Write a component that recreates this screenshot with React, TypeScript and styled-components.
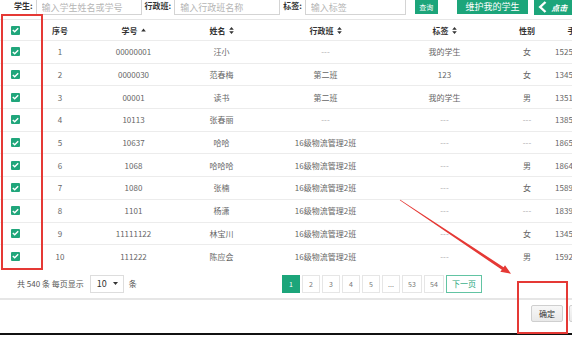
import styled, { createGlobalStyle } from "styled-components";

const GlobalStyle = createGlobalStyle`
  html, body {
    margin: 0;
    padding: 0;
    background: #ffffff;
  }
  body {
    font-family: "Noto Sans CJK SC", "Noto Sans", sans-serif;
  }
`;

const green = "#1ca57a";

interface StudentRow {
  no: number;
  code: string;
  name: string;
  klass: string;
  tag: string;
  gender: string;
  phone: string;
}

const rows: StudentRow[] = [
  { no: 1, code: "00000001", name: "汪小", klass: "---", tag: "我的学生", gender: "女", phone: "15259871234" },
  { no: 2, code: "0000030", name: "范春梅", klass: "第二班", tag: "123", gender: "女", phone: "13459874561" },
  { no: 3, code: "00001", name: "读书", klass: "第二班", tag: "我的学生", gender: "男", phone: "13514562378" },
  { no: 4, code: "10113", name: "张春丽", klass: "---", tag: "---", gender: "---", phone: "13854123698" },
  { no: 5, code: "10637", name: "哈哈", klass: "16级物流管理2班", tag: "---", gender: "---", phone: "18653214789" },
  { no: 6, code: "1068", name: "哈哈哈", klass: "16级物流管理2班", tag: "---", gender: "男", phone: "18647852136" },
  { no: 7, code: "1080", name: "张楠", klass: "16级物流管理2班", tag: "---", gender: "女", phone: "15896321478" },
  { no: 8, code: "1101", name: "杨潇", klass: "16级物流管理2班", tag: "---", gender: "---", phone: "18395147852" },
  { no: 9, code: "11111122", name: "林宝川", klass: "16级物流管理2班", tag: "---", gender: "女", phone: "13456987412" },
  { no: 10, code: "111222", name: "陈应会", klass: "16级物流管理2班", tag: "---", gender: "男", phone: "15921478563" },
];

const pages = ["1", "2", "3", "4", "5", "...", "53", "54"];

const CheckBox = () => (
  <StyledCheck>
    <svg width="7" height="6" viewBox="0 0 7 6">
      <path d="M0.8 3 L2.7 4.8 L6.2 1.2" fill="none" stroke="#fff" strokeWidth="1.4" />
    </svg>
  </StyledCheck>
);

const SortUp = () => (
  <svg width="5" height="4" viewBox="0 0 5 4">
    <path d="M2.5 0.5 L4.8 3.5 L0.2 3.5 Z" fill="#333" />
  </svg>
);

const SortBoth = () => (
  <svg width="5" height="7" viewBox="0 0 5 7">
    <path d="M2.5 0 L4.8 2.8 L0.2 2.8 Z M2.5 7 L4.8 4.2 L0.2 4.2 Z" fill="#333" />
  </svg>
);

const App = () => {
  return (
    <>
      <GlobalStyle />
      <Page>
        <FilterBar>
          <FilterLabel>学生:</FilterLabel>
          <FilterInput $width={106} placeholder="输入学生姓名或学号" />
          <FilterLabel>行政班:</FilterLabel>
          <FilterInput $width={106} placeholder="输入行政班名称" />
          <FilterLabel>标签:</FilterLabel>
          <FilterInput $width={101} placeholder="输入标签" />
          <GreenButton $width={23} $size={7}>查询</GreenButton>
          <GreenButton $width={72} $size={9}>维护我的学生</GreenButton>
          <SideTab>
            <svg width="9" height="12" viewBox="0 0 9 12">
              <path d="M7.5 1 L2.2 6 L7.5 11" fill="none" stroke="#fff" strokeWidth="2.4" />
            </svg>
            <span>点击</span>
          </SideTab>
        </FilterBar>

        <Table>
          <HeadRow>
            <Cell>
              <CheckBox />
            </Cell>
            <HeadCell>序号</HeadCell>
            <HeadCell>
              学号 <SortUp />
            </HeadCell>
            <HeadCell>
              姓名 <SortBoth />
            </HeadCell>
            <HeadCell>
              行政班 <SortBoth />
            </HeadCell>
            <HeadCell>
              标签 <SortBoth />
            </HeadCell>
            <HeadCell>性别</HeadCell>
            <HeadCell>手机号</HeadCell>
          </HeadRow>
          {rows.map((row) => (
            <BodyRow key={row.no}>
              <Cell>
                <CheckBox />
              </Cell>
              <Cell>{row.no}</Cell>
              <Cell>{row.code}</Cell>
              <Cell>{row.name}</Cell>
              <Cell $muted={row.klass === "---"}>{row.klass}</Cell>
              <Cell $muted={row.tag === "---"}>{row.tag}</Cell>
              <Cell $muted={row.gender === "---"}>{row.gender}</Cell>
              <Cell>{row.phone}</Cell>
            </BodyRow>
          ))}
        </Table>

        <Footer>
          <PageInfo>
            共 540 条 每页显示
            <PageSelect>
              10
              <svg width="5" height="3" viewBox="0 0 5 3">
                <path d="M0 0 L5 0 L2.5 3 Z" fill="#333" />
              </svg>
            </PageSelect>
            条
          </PageInfo>
          <Pager>
            {pages.map((p) => (
              <PageButton key={p} $active={p === "1"} $wide={p.length > 1 && p !== "..."}>
                {p}
              </PageButton>
            ))}
            <NextButton>下一页</NextButton>
          </Pager>
        </Footer>

        <Actions>
          <ActionButton>确定</ActionButton>
          <ActionButton>取消</ActionButton>
        </Actions>
        <BottomEdge />

        <Highlight $left={1} $top={14} $width={42} $height={256} />
        <Highlight $left={517} $top={281} $width={51} $height={53} />
        <ArrowLayer width="572" height="340" viewBox="0 0 572 340">
          <polygon
            points="400.2,199.7 503.6,267.2 505,265.2 511,273.8 500.3,271.8 501.9,269.8 399.8,200.3"
            fill="#e53935"
          />
        </ArrowLayer>
      </Page>
    </>
  );
};

export default App;

const Page = styled.div`
  position: relative;
  width: 572px;
  height: 340px;
  overflow: hidden;
  background: #ffffff;
  color: #666;
`;

const FilterBar = styled.div`
  display: flex;
  align-items: center;
  height: 24px;
  margin-top: -9px;
  padding-left: 14px;
  white-space: nowrap;
`;

const FilterLabel = styled.span`
  font-size: 8px;
  font-weight: bold;
  color: #333;
  margin-right: 3px;
  padding-top: 4px;
  &:not(:first-child) {
    margin-left: 3px;
  }
`;

const FilterInput = styled.input<{ $width: number }>`
  box-sizing: border-box;
  width: ${({ $width }) => $width}px;
  height: 23px;
  padding: 8px 0 0 5px;
  border: 1px solid #d4d4d4;
  font-family: inherit;
  font-size: 9px;
  outline: none;
  &::placeholder {
    color: #b5b5b5;
  }
  & + span {
    margin-left: 3px;
  }
`;

const GreenButton = styled.div<{ $width: number; $size: number }>`
  box-sizing: border-box;
  display: flex;
  align-items: center;
  justify-content: center;
  width: ${({ $width }) => $width}px;
  height: 22px;
  margin-left: 9px;
  margin-top: -1px;
  padding-top: 8px;
  background: ${green};
  color: #fff;
  font-size: ${({ $size }) => $size}px;
  & + & {
    margin-left: 19px;
  }
`;

const SideTab = styled.div`
  display: flex;
  align-items: center;
  gap: 4px;
  height: 23px;
  margin-left: 4px;
  padding: 8px 0 0 4px;
  box-sizing: border-box;
  background: ${green};
  color: #fff;
  font-size: 8px;
  font-style: italic;
  font-weight: bold;
  width: 40px;
  border-left: 2px solid #fff;
`;

const Table = styled.div`
  margin-top: 4px;
  border-top: 1px solid #e6e6e6;
  width: 620px;
`;

const HeadRow = styled.div`
  display: grid;
  grid-template-columns: 31px 58px 89px 87px 121px 117px 48px 57px;
  height: 20px;
  align-items: center;
`;

const BodyRow = styled(HeadRow)`
  height: 22.7px;
  box-sizing: border-box;
  border-top: 1px solid #ececec;
`;

const Cell = styled.div<{ $muted?: boolean }>`
  display: flex;
  align-items: center;
  justify-content: center;
  font-size: 8px;
  color: ${({ $muted }) => ($muted ? "#aaa" : "#666")};
  white-space: nowrap;
`;

const HeadCell = styled(Cell)`
  gap: 3px;
  font-weight: bold;
  color: #333;
`;

const StyledCheck = styled.span`
  display: inline-flex;
  align-items: center;
  justify-content: center;
  width: 9px;
  height: 9px;
  border-radius: 1px;
  background: #20a67b;
`;

const Footer = styled.div`
  display: flex;
  align-items: center;
  height: 33px;
  box-sizing: border-box;
  padding: 3px 90px 0 17px;
  border-bottom: 2px solid #e6e6e6;
`;

const PageInfo = styled.div`
  display: flex;
  align-items: center;
  font-size: 8px;
  color: #555;
  white-space: nowrap;
`;

const PageSelect = styled.div`
  display: flex;
  align-items: center;
  justify-content: space-between;
  box-sizing: border-box;
  width: 34px;
  height: 18px;
  margin: 0 5px 0 6px;
  padding: 0 5px 0 6px;
  border: 1px solid #ddd;
  font-size: 9px;
  color: #333;
`;

const Pager = styled.div`
  display: flex;
  gap: 2px;
  margin-left: auto;
`;

const PageButton = styled.div<{ $active?: boolean; $wide?: boolean }>`
  display: flex;
  align-items: center;
  justify-content: center;
  box-sizing: border-box;
  width: ${({ $wide }) => ($wide ? 20 : 18)}px;
  height: 18px;
  border: 1px solid ${({ $active }) => ($active ? green : "#e6e6e6")};
  background: ${({ $active }) => ($active ? green : "#fff")};
  color: ${({ $active }) => ($active ? "#fff" : "#777")};
  font-size: 7px;
`;

const NextButton = styled(PageButton)`
  width: 36px;
  border-color: #62c4a3;
  color: ${green};
  font-size: 8px;
`;

const Actions = styled.div`
  display: flex;
  justify-content: flex-end;
  gap: 6px;
  height: 33px;
  padding-top: 5px;
  box-sizing: border-box;
  margin-right: -29px;
`;

const ActionButton = styled.div`
  display: flex;
  align-items: center;
  justify-content: center;
  box-sizing: border-box;
  width: 32px;
  height: 17px;
  border: 1px solid #cfcfcf;
  border-radius: 2px;
  background: linear-gradient(#f7f7f7, #e9e9e9);
  color: #333;
  font-size: 8px;
`;

const BottomEdge = styled.div`
  height: 2px;
  background: #111;
`;

const Highlight = styled.div<{ $left: number; $top: number; $width: number; $height: number }>`
  position: absolute;
  left: ${({ $left }) => $left}px;
  top: ${({ $top }) => $top}px;
  width: ${({ $width }) => $width}px;
  height: ${({ $height }) => $height}px;
  box-sizing: border-box;
  border: 2px solid #e53935;
  pointer-events: none;
`;

const ArrowLayer = styled.svg`
  position: absolute;
  left: 0;
  top: 0;
  pointer-events: none;
`;
